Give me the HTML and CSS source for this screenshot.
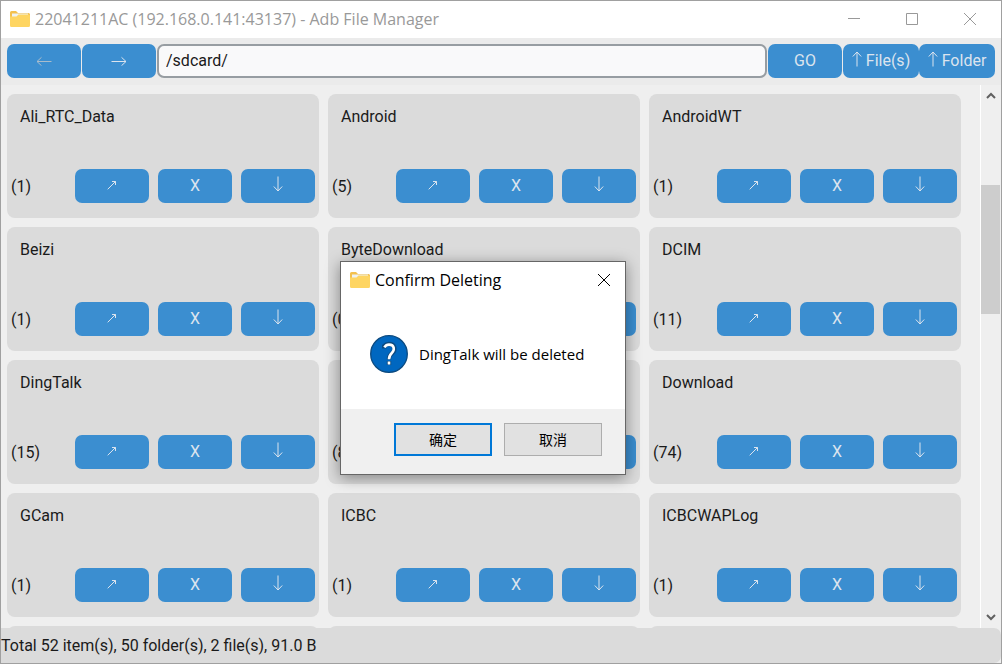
FILE: index.html
```html
<!DOCTYPE html>
<html lang="en">
<head>
<meta charset="utf-8">
<meta name="viewport" content="width=device-width, initial-scale=1">
<title>22041211AC (192.168.0.141:43137) - Adb File Manager</title>
<link rel="stylesheet" href="styles.css">
</head>
<body>
<svg class="sprite" aria-hidden="true">
  <symbol id="folder" viewBox="0 0 20 16"><path d="M0 1.500Q0 0 1.500 0H6L8 2H18.500Q20 2 20 3.500V8H0Z" fill="#f3c04e"/><path d="M2 2.500H18V7H2Z" fill="#eef2f3"/><path d="M0 5.500H6.500L8.500 3.500H18.500Q20 3.500 20 5V14.500Q20 16 18.500 16H1.500Q0 16 0 14.500Z" fill="#fed562"/></symbol>
  <symbol id="left" viewBox="0 0 16 10"><path d="M15.500 5.500H1M5.500 1.300L1 5.500L5.500 9.700"/></symbol>
  <symbol id="right" viewBox="0 0 16 10"><path d="M.5 5.500H15M10.500 1.300L15 5.500L10.500 9.700"/></symbol>
  <symbol id="up" viewBox="0 0 10 16"><path d="M5 15.500V1M.8 5.500L5 1L9.200 5.500"/></symbol>
  <symbol id="down" viewBox="0 0 10 16"><path d="M5 .5V15M.8 10.500L5 15L9.200 10.500"/></symbol>
  <symbol id="open" viewBox="0 0 10 10"><path d="M.7 9.300L8.500 1.500M5 1.500H8.500V5"/></symbol>
  <symbol id="cross" viewBox="0 0 14 14"><path d="M1 1L13 13M13 1L1 13"/></symbol>
</svg>
<div class="window">
  <header class="titlebar">
    <svg class="folder"><use href="#folder"/></svg>
    <h1 class="title">22041211AC (192.168.0.141:43137) - Adb File Manager</h1>
    <button class="caption" aria-label="Minimize"><svg class="cap-icon" viewBox="0 0 14 14"><path d="M1 6.500H13"/></svg></button>
    <button class="caption" aria-label="Maximize"><svg class="cap-icon" viewBox="0 0 14 14"><path d="M1.500 1.500H12.500V12.500H1.500Z"/></svg></button>
    <button class="caption" aria-label="Close"><svg class="cap-icon"><use href="#cross"/></svg></button>
  </header>
  <form class="toolbar">
    <button type="button" class="btn" aria-label="Back" disabled><svg class="wide"><use href="#left"/></svg></button>
    <button type="button" class="btn" aria-label="Forward"><svg class="wide"><use href="#right"/></svg></button>
    <input class="path" type="text" aria-label="Path" value="/sdcard/">
    <button type="button" class="btn">GO</button>
    <div class="uploads">
      <button type="button" class="btn upload"><svg class="tall"><use href="#up"/></svg>File(s)</button>
      <button type="button" class="btn upload"><svg class="tall"><use href="#up"/></svg>Folder</button>
    </div>
  </form>
  <main class="content">
    <div class="grid">
      <section class="card"><h2 class="name">Ali_RTC_Data</h2><div class="row"><span class="count">(1)</span><button class="btn" aria-label="Open"><svg class="small"><use href="#open"/></svg></button><button class="btn">X</button><button class="btn" aria-label="Download"><svg class="tall"><use href="#down"/></svg></button></div></section>
      <section class="card"><h2 class="name">Android</h2><div class="row"><span class="count">(5)</span><button class="btn" aria-label="Open"><svg class="small"><use href="#open"/></svg></button><button class="btn">X</button><button class="btn" aria-label="Download"><svg class="tall"><use href="#down"/></svg></button></div></section>
      <section class="card"><h2 class="name">AndroidWT</h2><div class="row"><span class="count">(1)</span><button class="btn" aria-label="Open"><svg class="small"><use href="#open"/></svg></button><button class="btn">X</button><button class="btn" aria-label="Download"><svg class="tall"><use href="#down"/></svg></button></div></section>
      <section class="card"><h2 class="name">Beizi</h2><div class="row"><span class="count">(1)</span><button class="btn" aria-label="Open"><svg class="small"><use href="#open"/></svg></button><button class="btn">X</button><button class="btn" aria-label="Download"><svg class="tall"><use href="#down"/></svg></button></div></section>
      <section class="card"><h2 class="name">ByteDownload</h2><div class="row"><span class="count">(0)</span><button class="btn" aria-label="Open"><svg class="small"><use href="#open"/></svg></button><button class="btn">X</button><button class="btn" aria-label="Download"><svg class="tall"><use href="#down"/></svg></button></div></section>
      <section class="card"><h2 class="name">DCIM</h2><div class="row"><span class="count">(11)</span><button class="btn" aria-label="Open"><svg class="small"><use href="#open"/></svg></button><button class="btn">X</button><button class="btn" aria-label="Download"><svg class="tall"><use href="#down"/></svg></button></div></section>
      <section class="card"><h2 class="name">DingTalk</h2><div class="row"><span class="count">(15)</span><button class="btn" aria-label="Open"><svg class="small"><use href="#open"/></svg></button><button class="btn">X</button><button class="btn" aria-label="Download"><svg class="tall"><use href="#down"/></svg></button></div></section>
      <section class="card"><h2 class="name"></h2><div class="row"><span class="count">(8)</span><button class="btn" aria-label="Open"><svg class="small"><use href="#open"/></svg></button><button class="btn">X</button><button class="btn" aria-label="Download"><svg class="tall"><use href="#down"/></svg></button></div></section>
      <section class="card"><h2 class="name">Download</h2><div class="row"><span class="count">(74)</span><button class="btn" aria-label="Open"><svg class="small"><use href="#open"/></svg></button><button class="btn">X</button><button class="btn" aria-label="Download"><svg class="tall"><use href="#down"/></svg></button></div></section>
      <section class="card"><h2 class="name">GCam</h2><div class="row"><span class="count">(1)</span><button class="btn" aria-label="Open"><svg class="small"><use href="#open"/></svg></button><button class="btn">X</button><button class="btn" aria-label="Download"><svg class="tall"><use href="#down"/></svg></button></div></section>
      <section class="card"><h2 class="name">ICBC</h2><div class="row"><span class="count">(1)</span><button class="btn" aria-label="Open"><svg class="small"><use href="#open"/></svg></button><button class="btn">X</button><button class="btn" aria-label="Download"><svg class="tall"><use href="#down"/></svg></button></div></section>
      <section class="card"><h2 class="name">ICBCWAPLog</h2><div class="row"><span class="count">(1)</span><button class="btn" aria-label="Open"><svg class="small"><use href="#open"/></svg></button><button class="btn">X</button><button class="btn" aria-label="Download"><svg class="tall"><use href="#down"/></svg></button></div></section>
      <section class="card"></section>
      <section class="card"></section>
      <section class="card"></section>
    </div>
    <div class="scrollbar" aria-hidden="true">
      <svg class="chevron" viewBox="0 0 10 8"><path d="M1 6L5 2L9 6"/></svg>
      <div class="track"><div class="above"></div><div class="thumb"></div><div class="below"></div></div>
      <svg class="chevron" viewBox="0 0 10 8"><path d="M1 2L5 6L9 2"/></svg>
    </div>
  </main>
  <footer class="status">Total 52 item(s), 50 folder(s), 2 file(s), 91.0 B</footer>
</div>
<div class="dialog" role="dialog" aria-labelledby="dialog-title">
  <header class="dialog-head">
    <svg class="folder"><use href="#folder"/></svg>
    <h2 class="dialog-title" id="dialog-title">Confirm Deleting</h2>
    <button class="dialog-close" aria-label="Close"><svg class="cap-icon"><use href="#cross"/></svg></button>
  </header>
  <div class="dialog-body">
    <svg class="question" viewBox="0 0 38 38" aria-hidden="true"><circle cx="19" cy="19" r="18.300" fill="#0067c0" stroke="#0b4a80" stroke-width="1.300"/><g fill="none" stroke-linecap="butt"><path d="M14.200 13.500V11Q16 9 19 9C25.500 9 25.500 15.500 22.500 17.900C20 20 19 20.800 19 24.500M19 26V30" stroke="#0b4a80" stroke-width="4.400"/><path d="M14.400 12.300Q16 9.600 19 9.600C25 9.600 24.500 15.400 22 17.700C19.800 19.800 19 20.800 19 24.300M19 26.600V29.500" stroke="#fff" stroke-width="2.600"/></g></svg>
    <p class="message">DingTalk will be deleted</p>
  </div>
  <footer class="dialog-foot">
    <button class="choice primary" lang="zh-CN">确定</button>
    <button class="choice" lang="zh-CN">取消</button>
  </footer>
</div>
</body>
</html>
```
FILE: styles.css
```css
* { box-sizing: border-box; }
body { margin: 0; font: 16px/20px Roboto, sans-serif; color: #1a1a1a; }
h1, h2, p { margin: 0; font-weight: 400; }
button { margin: 0; padding: 0; border: 0; background: none; font: inherit; color: inherit; }
svg { display: block; flex: none; fill: none; stroke: currentColor; }
.sprite { position: absolute; width: 0; height: 0; }
.window { display: flex; flex-direction: column; height: 100vh; border: 1px solid #a0a0a0; background: #efefef; overflow: hidden; }
.folder { width: 20px; height: 16px; stroke: none; }
.cap-icon { width: 14px; height: 14px; }

.titlebar { display: flex; align-items: center; flex: none; height: 37px; padding: 0 2px 1px 9px; background: #fff; color: #999; }
.title { flex: 1; padding-left: 5px; font: 16px/22px "Open Sans", sans-serif; white-space: nowrap; }
.caption { display: grid; place-items: center; width: 58px; height: 36px; }

.toolbar { display: flex; flex: none; gap: 1px; padding: 6px 6px 7px; background: #ebebeb; }
.btn { display: flex; align-items: center; justify-content: center; flex: none; width: 74px; height: 34px; border-radius: 7px; background: #3b8ed0; color: #dce4ee; }
.btn:disabled { color: #a9bccb; }
.uploads { display: flex; }
.upload { gap: 4px; width: 76px; }
.path { flex: 1; min-width: 0; height: 34px; padding: 0 7px 2px; border: 2px solid #979da2; border-radius: 7px; background: #f9f9fa; color: #1a1a1a; font: inherit; }
.wide { width: 16px; height: 10px; }
.tall { width: 10px; height: 16px; margin-bottom: 4px; }
.small { width: 10px; height: 10px; margin-bottom: 2px; }

.content { display: flex; flex: 1; min-height: 0; }
.grid { display: grid; flex: 1; grid-template-columns: repeat(3, 1fr); grid-auto-rows: 124px; gap: 9px; padding: 9px 19px 0 6px; overflow: hidden; }
.card { display: flex; flex-direction: column; justify-content: space-between; padding: 13px 4px 15px; border-radius: 8px; background: #dbdbdb; }
.name { padding-left: 9px; font-size: 16px; }
.row { display: flex; align-items: center; gap: 9px; }
.count { flex: 1; padding-top: 2px; }

.scrollbar { display: flex; flex-direction: column; align-items: center; width: 21px; padding: 7px 1px 7px 0; border-left: 1px solid #fff; }
.chevron { width: 10px; height: 8px; stroke: #606060; stroke-width: 2; }
.track { display: flex; flex-direction: column; flex: 1; align-self: stretch; }
.above { flex: 85; }
.thumb { flex: 129; background: #cdcdcd; }
.below { flex: 299; }

.status { flex: none; height: 35px; padding: 8px 0 7px; border-radius: 0 7px 7px 0; background: #dbdbdb; }

.dialog { position: absolute; left: 340px; top: 261px; width: 286px; border: 1px solid #666; background: #fff; color: #000; box-shadow: 0 3px 14px rgba(0, 0, 0, .4); }
.dialog-head { display: flex; align-items: center; height: 36px; padding: 0 14px 0 9px; }
.dialog-title { flex: 1; padding-left: 5px; font: 16px/22px "Open Sans", sans-serif; }
.dialog-close { display: grid; place-items: center; }
.dialog-body { display: flex; align-items: center; gap: 11px; height: 111px; padding: 0 29px; }
.question { width: 38px; height: 38px; stroke: none; }
.message { font: 15px/20px "Open Sans", sans-serif; white-space: nowrap; }
.dialog-foot { display: flex; justify-content: flex-end; gap: 12px; padding: 14px 23px 18px; background: #f0f0f0; }
.choice { width: 98px; height: 33px; padding-bottom: 2px; border: 1px solid #adadad; background: #e1e1e1; font: 14px/20px "Noto Sans CJK SC", sans-serif; }
.primary { border: 2px solid #0078d7; }
```
